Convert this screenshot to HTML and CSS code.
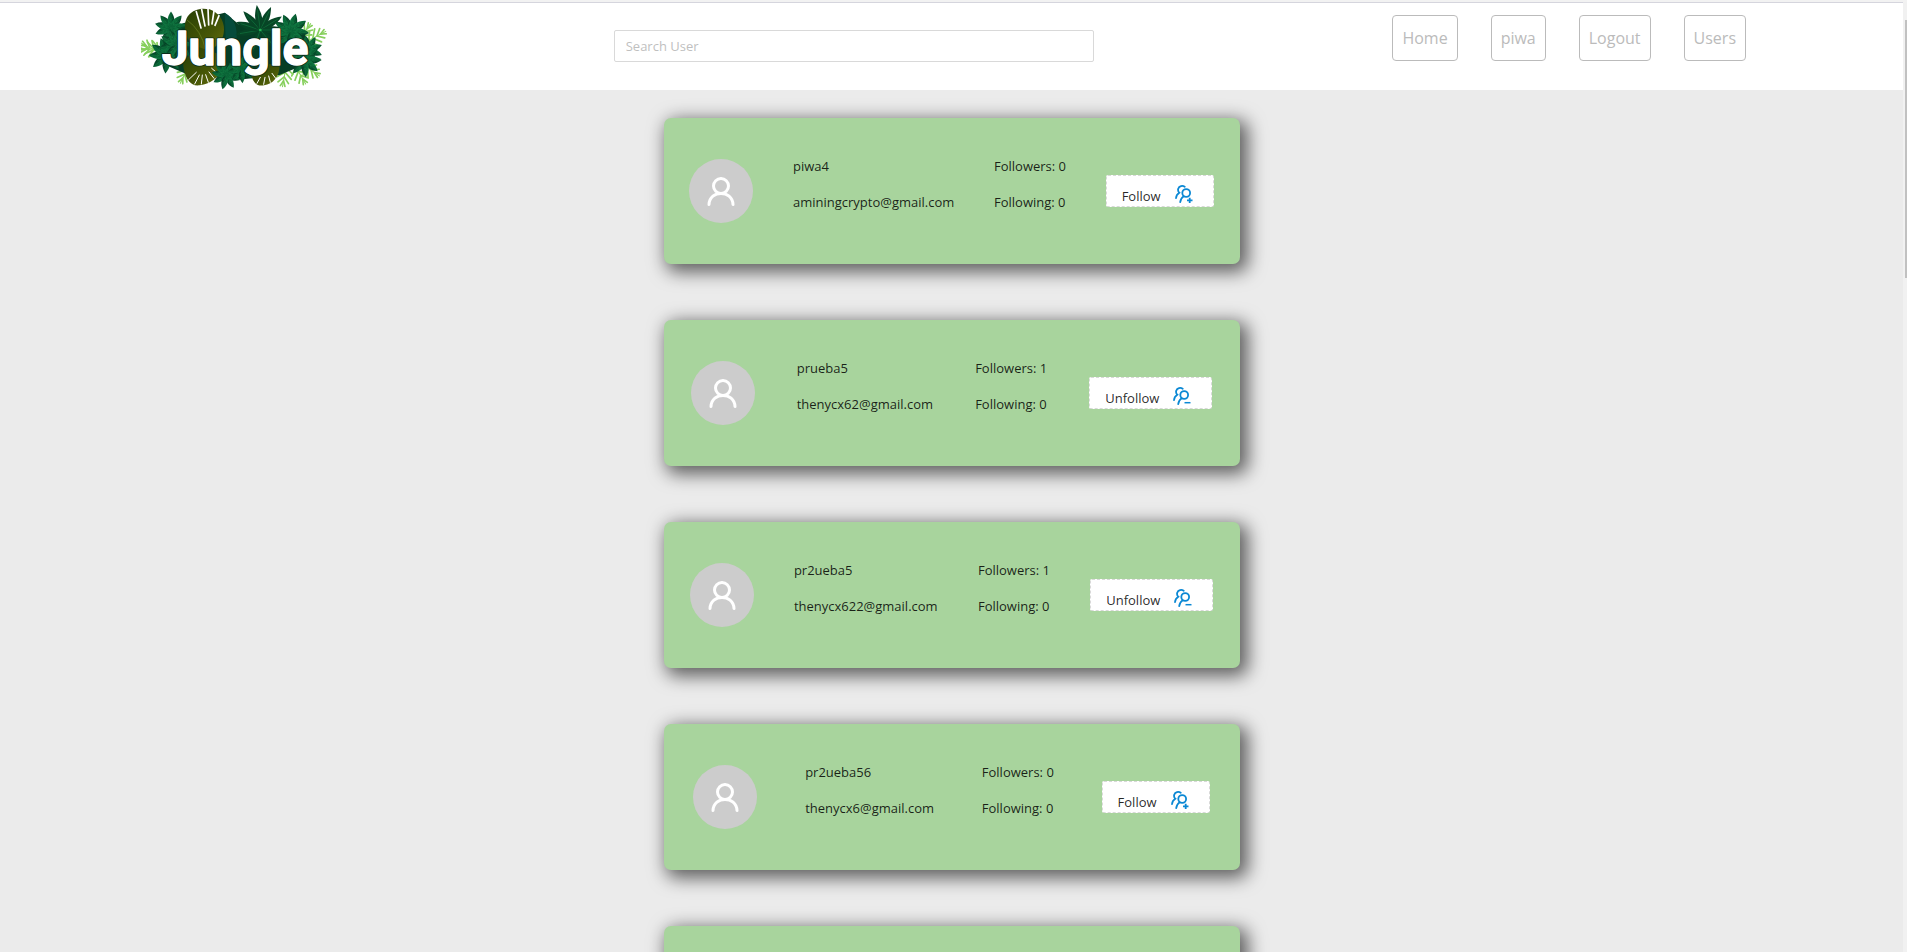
FILE: index.html
```html
<!DOCTYPE html>
<html lang="en">
<head>
<meta charset="utf-8">
<title>Jungle - Users</title>
<link rel="stylesheet" href="styles.css">
</head>
<body>
<svg class="defs" aria-hidden="true">
  <defs>
    <linearGradient id="g-leaf" x1="0" x2="1"><stop offset="0" stop-color="#0f7a42"/><stop offset=".5" stop-color="#075a31"/><stop offset="1" stop-color="#033a22"/></linearGradient>
    <linearGradient id="g-olive" x1="0" x2="1" y1="0" y2="1"><stop offset="0" stop-color="#263f05"/><stop offset=".6" stop-color="#465607"/><stop offset="1" stop-color="#69700c"/></linearGradient>
    <g id="leaf"><path d="M0 0C-15 -12 -14 -34 0 -52C14 -34 15 -12 0 0Z" fill="url(#g-leaf)"/><path d="M0 0V-46M0 -12L-7 -20M0 -12L7 -20M0 -24L-7 -32M0 -24L7 -32" stroke="#1d8b4c" stroke-width="1" fill="none"/></g>
    <g id="rosette"><use href="#leaf" transform="rotate(-150)"/><use href="#leaf" transform="rotate(-110)"/><use href="#leaf" transform="rotate(-75)"/><use href="#leaf" transform="rotate(-40)"/><use href="#leaf"/><use href="#leaf" transform="rotate(40)"/><use href="#leaf" transform="rotate(80)"/><use href="#leaf" transform="rotate(120)"/><use href="#leaf" transform="rotate(165)"/></g>
    <g id="fern" fill="none" stroke="#86cf5c" stroke-linecap="round"><path d="M0 0V-66" stroke-width="3"/><path d="M0 -8L-24 -24M0 -8L24 -24M0 -22L-22 -40M0 -22L22 -40M0 -36L-16 -54M0 -36L16 -54M0 -48L-7 -64M0 -48L7 -64" stroke-width="5"/></g>
    <g id="finger"><path d="M0 0C-15 -20 -13 -48 0 -76C13 -48 15 -20 0 0Z" fill="#074526"/><path d="M0 0V-62" stroke="#138345" stroke-width="1.5"/></g>
    <symbol id="i-user" viewBox="0 0 32 32"><g fill="none" stroke="#fff" stroke-width="3" stroke-linecap="round"><circle cx="16" cy="11" r="7.5"/><path d="M4 29.500C4.600 14.700 27.400 14.700 28 29.500"/></g></symbol>
    <symbol id="i-group" viewBox="0 0 18 18"><g fill="none" stroke="#0b88d4" stroke-width="1.800" stroke-linecap="round"><circle cx="11.200" cy="8" r="3.900"/><path d="M5.200 17.100C5.600 14.300 6.800 12.500 8.700 11.300M9.700 1.700C7.500 .300 4.200 .900 3.200 3.700C2.800 5.400 3.200 6.700 4.300 7.700C2.300 8.900 1.200 10.700 1 13.200"/></g></symbol>
    <symbol id="i-add" viewBox="0 0 18 18"><use href="#i-group"/><path d="M14.700 12.800V18M12 15.400H17.500" stroke="#0b88d4" stroke-width="1.800"/></symbol>
    <symbol id="i-remove" viewBox="0 0 18 18"><use href="#i-group"/><path d="M11.500 15.700H17.500" stroke="#0b88d4" stroke-width="1.500"/></symbol>
  </defs>
</svg>
<div class="shell">
  <div class="page">
    <header class="header">
      <a class="logo" href="#" aria-label="Jungle">
        <svg class="logo-art" viewBox="34 9 564 261">
          <use href="#fern" transform="translate(92 160) rotate(-62)"/>
          <use href="#fern" transform="translate(95 145) rotate(-95)"/>
          <use href="#fern" transform="translate(505 125) rotate(35)"/>
          <use href="#fern" transform="translate(530 125) rotate(62)"/>
          <use href="#fern" transform="translate(495 195) rotate(150)"/>
          <use href="#fern" transform="translate(470 195) rotate(190)"/>
          <use href="#fern" transform="translate(515 190) rotate(125)"/>
          <use href="#fern" transform="translate(180 190) rotate(205)"/>
          <path d="M105 100L160 70L285 38L330 75L450 80L525 100L545 185L450 225L340 238L250 232L165 220L95 190Z" fill="#063e25"/>
          <use href="#rosette" transform="translate(124 84) scale(.95)"/>
          <use href="#rosette" transform="translate(112 166) rotate(20) scale(1.050)"/>
          <use href="#rosette" transform="translate(140 135) rotate(50)"/>
          <path d="M168 100C155 45 195 18 240 28C287 45 294 100 268 130L235 160L190 150Z" fill="url(#g-olive)"/>
          <path d="M200 35L214 84M216 28L226 78M235 26L237 75M253 33L247 72M268 47L256 76" stroke="#fff" stroke-width="5" stroke-linecap="round"/>
          <path d="M172 60Q215 90 228 150" stroke="#6c8424" stroke-width="2" fill="none"/>
          <path d="M160 185C162 235 183 260 210 256C260 249 290 210 275 165L205 140Z" fill="url(#g-olive)"/>
          <path d="M177 239L200 217M195 252L209 225M215 252L218 225M236 247L228 224M253 235L238 216M265 221L246 205" stroke="#fff" stroke-width="3" stroke-linecap="round"/>
          <path d="M285 38C315 54 325 84 320 125L288 122Z" fill="#064b3b"/>
          <g transform="translate(392 90)"><use href="#finger" transform="rotate(-100)"/><use href="#finger" transform="rotate(-72)"/><use href="#finger" transform="rotate(-42)"/><use href="#finger" transform="rotate(-8)"/><use href="#finger" transform="rotate(25)"/><use href="#finger" transform="rotate(58)"/><use href="#finger" transform="rotate(90)"/><use href="#finger" transform="rotate(140)"/><use href="#finger" transform="rotate(200)"/><circle r="4" fill="#25b455"/></g>
          <path d="M365 225C370 250 385 260 403 256C430 252 450 230 450 195L390 190Z" fill="url(#g-olive)"/>
          <path d="M382 250L392 232M402 253L406 232M422 247L417 228M438 235L427 220" stroke="#fff" stroke-width="3" stroke-linecap="round"/>
          <use href="#rosette" transform="translate(484 94) rotate(15) scale(1.050)"/>
          <use href="#rosette" transform="translate(535 150) rotate(30) scale(.850)"/>
          <use href="#rosette" transform="translate(524 180) rotate(10)"/>
          <use href="#rosette" transform="translate(290 225) rotate(30) scale(.850)"/>
          <use href="#rosette" transform="translate(335 208) rotate(10) scale(.800)"/>
          <text class="wordmark wordmark-edge" x="96" y="194">Jungle</text>
          <text class="wordmark" x="96" y="194" aria-hidden="true">Jungle</text>
        </svg>
      </a>
      <input class="search" type="text" placeholder="Search User" aria-label="Search User">
      <nav class="nav">
        <a class="nav-link" href="#">Home</a>
        <a class="nav-link" href="#">piwa</a>
        <a class="nav-link" href="#">Logout</a>
        <a class="nav-link" href="#">Users</a>
      </nav>
    </header>
    <main class="users">
      <article class="card">
        <span class="avatar"><svg class="avatar-icon"><use href="#i-user"/></svg></span>
        <div class="info"><p>piwa4</p><p>aminingcrypto@gmail.com</p></div>
        <div class="info"><p>Followers: 0</p><p>Following: 0</p></div>
        <button class="follow" type="button">Follow<svg class="follow-icon"><use href="#i-add"/></svg></button>
      </article>
      <article class="card">
        <span class="avatar"><svg class="avatar-icon"><use href="#i-user"/></svg></span>
        <div class="info"><p>prueba5</p><p>thenycx62@gmail.com</p></div>
        <div class="info"><p>Followers: 1</p><p>Following: 0</p></div>
        <button class="follow" type="button">Unfollow<svg class="follow-icon"><use href="#i-remove"/></svg></button>
      </article>
      <article class="card">
        <span class="avatar"><svg class="avatar-icon"><use href="#i-user"/></svg></span>
        <div class="info"><p>pr2ueba5</p><p>thenycx622@gmail.com</p></div>
        <div class="info"><p>Followers: 1</p><p>Following: 0</p></div>
        <button class="follow" type="button">Unfollow<svg class="follow-icon"><use href="#i-remove"/></svg></button>
      </article>
      <article class="card">
        <span class="avatar"><svg class="avatar-icon"><use href="#i-user"/></svg></span>
        <div class="info"><p>pr2ueba56</p><p>thenycx6@gmail.com</p></div>
        <div class="info"><p>Followers: 0</p><p>Following: 0</p></div>
        <button class="follow" type="button">Follow<svg class="follow-icon"><use href="#i-add"/></svg></button>
      </article>
      <article class="card"></article>
    </main>
  </div>
  <div class="scrollbar"><div class="thumb"></div></div>
</div>
</body>
</html>
```
FILE: styles.css
```css
* {
  box-sizing: border-box;
}

body {
  margin: 0;
  background: #ebebeb;
  color: rgba(0, 0, 0, 0.85);
  font-family: "Open Sans", "Noto Sans", sans-serif;
  font-size: 13px;
  line-height: 22px;
}

.defs {
  position: absolute;
  width: 0;
  height: 0;
}

.shell {
  display: flex;
  height: 100vh;
  overflow: hidden;
  border-top: 2px solid #f2f2f2;
}

.page {
  flex: 1;
  min-width: 0;
}

.header {
  display: flex;
  align-items: flex-start;
  justify-content: space-between;
  height: 88px;
  padding: 0 157px 0 141px;
  border-top: 1px solid #d5d5dd;
  background: #fff;
}

.logo {
  display: block;
}

.logo-art {
  display: block;
  width: 188px;
  height: 87px;
}

.wordmark {
  fill: #fff;
  stroke: #fff;
  stroke-width: 4px;
  stroke-linejoin: round;
  font: 700 144px Roboto, sans-serif;
}

.wordmark-edge {
  stroke: #0a2b18;
  stroke-width: 9px;
}

.search {
  width: 480px;
  height: 32px;
  margin-top: 27px;
  padding: 4px 11px;
  border: 1px solid #d9d9d9;
  border-radius: 2px;
  background: #fff;
  font: inherit;
}

.search::placeholder {
  color: #bfbfbf;
  opacity: 1;
}

.nav {
  display: flex;
  gap: 33px;
  margin: 12px 0 0 14px;
}

.nav-link {
  padding: 10px 9px;
  border: 1px solid #bbb;
  border-radius: 4px;
  color: #bbb;
  font-size: 16px;
  line-height: 24px;
  text-decoration: none;
}

.users {
  display: flex;
  flex-direction: column;
  align-items: center;
  gap: 56px;
  padding: 28px 16px;
}

.card {
  display: flex;
  align-items: center;
  justify-content: space-around;
  flex-shrink: 0;
  width: 576px;
  max-width: 100%;
  min-height: 146px;
  padding: 0 6px;
  border-radius: 7px;
  background: #a8d49d;
  box-shadow: 5px 5px 18px 3px rgba(0, 0, 0, 0.6);
}

.avatar {
  display: flex;
  align-items: center;
  justify-content: center;
  width: 64px;
  height: 64px;
  border-radius: 50%;
  background: #ccc;
}

.avatar-icon {
  width: 32px;
  height: 32px;
}

.info p {
  margin: 0 0 14px;
}

.follow {
  display: flex;
  align-items: center;
  gap: 14px;
  height: 32px;
  padding: 10px 20px 0 15px;
  border: 1px dashed #d9d9d9;
  border-radius: 2px;
  background: #fff;
  color: inherit;
  font: inherit;
}

.follow-icon {
  width: 18px;
  height: 18px;
  margin-bottom: 4px;
}

.scrollbar {
  width: 4px;
  padding: 18px 0 0 2px;
  background: #f1f1f1;
}

.thumb {
  height: 258px;
  background: #c1c1c1;
}
```
